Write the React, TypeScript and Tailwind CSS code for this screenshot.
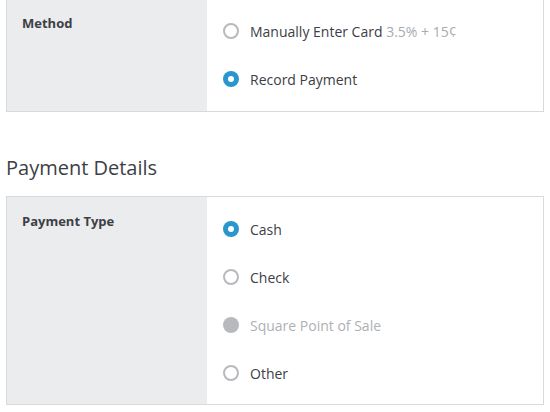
import React from "react";

type Option = {
  label: string;
  hint?: string;
  state: "off" | "on" | "disabled";
};

const methodOptions: Option[] = [
  { label: "Manually Enter Card", hint: "3.5% + 15¢", state: "off" },
  { label: "Record Payment", state: "on" },
];

const paymentOptions: Option[] = [
  { label: "Cash", state: "on" },
  { label: "Check", state: "off" },
  { label: "Square Point of Sale", state: "disabled" },
  { label: "Other", state: "off" },
];

function Radio({ state }: { state: Option["state"] }) {
  if (state === "on") {
    return (
      <span className="flex h-4 w-4 items-center justify-center rounded-full bg-[#2996cc]">
        <span className="h-[6px] w-[6px] rounded-full bg-white" />
      </span>
    );
  }
  if (state === "disabled") {
    return <span className="h-4 w-4 rounded-full bg-[#b7b9bd]" />;
  }
  return <span className="h-4 w-4 rounded-full border-2 border-[#b7b9bd] bg-white" />;
}

function Section({
  label,
  options,
  className = "",
  bodyClass = "pb-2",
}: {
  label: string;
  options: Option[];
  className?: string;
  bodyClass?: string;
}) {
  return (
    <div className={"mx-[6px] flex border border-[#d8d9db] " + className}>
      <div className="w-[200px] shrink-0 bg-[#ebecee] pl-[15px] pt-[15px] text-[13px] font-bold text-[#3c4046]">
        {label}
      </div>
      <div className={"flex-1 bg-white pt-2 pl-4 " + bodyClass}>
        {options.map((o) => (
          <div key={o.label} className="flex h-12 items-center gap-[11px]">
            <Radio state={o.state} />
            <span
              className={
                "text-[14px] " + (o.state === "disabled" ? "text-[#aeb0b4]" : "text-[#3c4046]")
              }
            >
              {o.label}
              {o.hint && <span className="text-[#a8abaf]"> {o.hint}</span>}
            </span>
          </div>
        ))}
      </div>
    </div>
  );
}

export default function App() {
  return (
    <div
      className="h-[412px] w-[550px] overflow-hidden bg-white"
      style={{ fontFamily: '"Open Sans", "Liberation Sans", sans-serif' }}
    >
      <Section label="Method" options={methodOptions} className="-mt-[2px]" />
      <h2 className="mx-[6px] mt-[42px] text-[20px] font-medium leading-[28px] text-[#3c4046]">
        Payment Details
      </h2>
      <div className="h-[14px]" />
      <Section label="Payment Type" options={paymentOptions} bodyClass="pb-[7px]" />
    </div>
  );
}
